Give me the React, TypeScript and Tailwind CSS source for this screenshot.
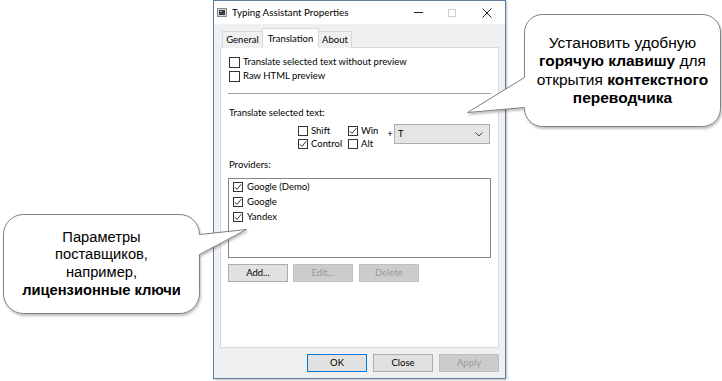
import React from 'react';

// Small Win10-style checkbox
const Check = ({ checked = false, size = 11 }: { checked?: boolean; size?: number }) => (
  <span
    className={`shrink-0 border border-[#333333] bg-white flex items-center justify-center ${size === 11 ? 'w-[11px] h-[11px]' : 'w-[10px] h-[10px]'}`}
  >
    {checked && (
      <svg width="8" height="8" viewBox="0 0 8 8">
        <path d="M0.8 4.2 L3 6.4 L7.2 1.2" fill="none" stroke="#333333" strokeWidth="1" />
      </svg>
    )}
  </span>
);

const Btn = ({ label, disabled = false, primary = false, className = '' }: { label: string; disabled?: boolean; primary?: boolean; className?: string }) => (
  <div
    className={`h-[18px] w-[60px] flex items-center justify-center border ${
      disabled
        ? 'bg-[#cccccc] border-[#bfbfbf] text-[#9a9a9a]'
        : primary
        ? 'bg-[#e1e1e1] border-[#0078d7] text-black'
        : 'bg-[#e1e1e1] border-[#adadad] text-black'
    } ${className}`}
  >
    {label}
  </div>
);

const Callouts = () => (
  <svg className="absolute left-0 top-0 pointer-events-none" width="722" height="381" viewBox="0 0 722 381">
    <defs>
      <filter id="sh" x="-10%" y="-10%" width="120%" height="130%">
        <feDropShadow dx="1" dy="2" stdDeviation="1.2" floodColor="#000" floodOpacity="0.25" />
      </filter>
    </defs>
    <path
      d="M542.5 14.5 H702.5 A18 18 0 0 1 720.5 32.5 V108.5 A18 18 0 0 1 702.5 126.5 H542.5 A18 18 0 0 1 524.5 108.5 V107.5 L467.5 112.5 L524.5 77.5 V32.5 A18 18 0 0 1 542.5 14.5 Z"
      fill="#ffffff"
      stroke="#7f7f7f"
      strokeWidth="1"
      filter="url(#sh)"
    />
    <path
      d="M23.5 214.5 H179.5 A20 20 0 0 1 199.5 234.5 L246.5 229.5 L199.5 254.5 V293.5 A20 20 0 0 1 179.5 313.5 H23.5 A20 20 0 0 1 3.5 293.5 V234.5 A20 20 0 0 1 23.5 214.5 Z"
      fill="#ffffff"
      stroke="#7f7f7f"
      strokeWidth="1"
      filter="url(#sh)"
    />
  </svg>
);

export default function App() {
  return (
    <div className="relative w-[722px] h-[381px] bg-white overflow-hidden font-['Lato',sans-serif] text-[9.5px] text-black leading-none">
      {/* dialog window */}
      <div className="ml-[213px] w-[293px] h-[379px] border border-[#5d7d9e] bg-[#f0f0f0] flex flex-col shadow-[1px_1px_2px_rgba(0,0,0,0.25)]">
        {/* title bar */}
        <div className="h-[23px] bg-white flex items-center shrink-0">
          <svg className="ml-[3px]" width="10" height="9" viewBox="0 0 10 9">
            <rect x="0.5" y="0.5" width="9" height="8" fill="#d8d8d8" stroke="#8a8a8a" />
            <rect x="2" y="2" width="6" height="5" fill="#3a3a3a" />
            <rect x="3" y="3" width="2" height="1" fill="#bdbdbd" />
          </svg>
          <span className="ml-[5px] text-[9.8px] text-black">Typing Assistant Properties</span>
          <div className="ml-auto flex items-center h-full">
            <div className="w-[34px] h-full flex items-center justify-center">
              <div className="w-[9px] h-px bg-[#222]" />
            </div>
            <div className="w-[34px] h-full flex items-center justify-center">
              <div className="w-[8px] h-[8px] border border-[#cfcfcf]" />
            </div>
            <div className="w-[36px] h-full flex items-center justify-center">
              <svg width="10" height="10" viewBox="0 0 10 10">
                <path d="M0.5 0.5 L9.5 9.5 M9.5 0.5 L0.5 9.5" stroke="#222" strokeWidth="1" />
              </svg>
            </div>
          </div>
        </div>

        {/* body */}
        <div className="flex-1 flex flex-col px-[6px] pt-[4px] pb-[6px]">
          {/* tabs */}
          <div className="h-[20px] -mb-px flex items-end pl-[2px] relative z-10">
            <div className="h-[17px] border border-b-0 border-[#d9d9d9] bg-[#f0f0f0] flex items-center w-[41px] justify-center">General</div>
            <div className="h-[20px] w-[57px] border border-b-0 border-[#d9d9d9] bg-white flex items-center justify-center -mx-px">Translation</div>
            <div className="h-[17px] w-[34px] border border-b-0 border-[#d9d9d9] bg-[#f0f0f0] flex items-center justify-center">About</div>
          </div>

          {/* tab panel */}
          <div className="flex-1 border border-[#d9d9d9] bg-white pl-[7px] pr-[7px] pt-[7px] flex flex-col">
            <div className="h-[14px] flex items-center gap-[3px] pl-px">
              <Check />
              <span>Translate selected text without preview</span>
            </div>
            <div className="h-[14px] flex items-center gap-[3px] pl-px">
              <Check />
              <span>Raw HTML preview</span>
            </div>

            <div className="mt-[10px] h-px bg-[#a0a0a0]" />

            <div className="mt-[12px] h-[14px] flex items-center pl-px">Translate selected text:</div>

            {/* hotkey */}
            <div className="mt-[4px] flex items-start pl-[70px]">
              <div className="w-[88px] grid grid-cols-[50px_38px]">
                <div className="h-[13px] flex items-center gap-[3px]">
                  <Check size={10} />
                  <span>Shift</span>
                </div>
                <div className="h-[13px] flex items-center gap-[3px]">
                  <Check size={10} checked />
                  <span>Win</span>
                </div>
                <div className="h-[13px] flex items-center gap-[3px]">
                  <Check size={10} checked />
                  <span>Control</span>
                </div>
                <div className="h-[13px] flex items-center gap-[3px]">
                  <Check size={10} />
                  <span>Alt</span>
                </div>
              </div>
              <div className="w-[8px] h-[20px] flex items-center justify-center">+</div>
              <div className="w-[96px] h-[20px] border border-[#adadad] bg-[#e5e5e5] flex items-center pl-[3px] pr-[6px]">
                <span>T</span>
                <svg className="ml-auto" width="8" height="5" viewBox="0 0 8 5">
                  <path d="M0.5 0.5 L4 4 L7.5 0.5" fill="none" stroke="#444" strokeWidth="1" />
                </svg>
              </div>
            </div>

            <div className="mt-[8px] h-[14px] flex items-center pl-px">Providers:</div>

            {/* providers list */}
            <div className="mt-[6px] h-[80px] border border-[#828790] bg-white pl-[4px]">
              {['Google (Demo)', 'Google', 'Yandex'].map((p) => (
                <div key={p} className="h-[15px] flex items-center gap-[4px]">
                  <Check size={10} checked />
                  <span>{p}</span>
                </div>
              ))}
            </div>

            <div className="mt-[6px] flex">
              <Btn label="Add..." />
              <Btn label="Edit..." disabled className="ml-[5px]" />
              <Btn label="Delete" disabled className="ml-[6px]" />
            </div>
          </div>

          {/* dialog buttons */}
          <div className="mt-[6px] flex justify-end gap-[6px]">
            <Btn label="OK" primary />
            <Btn label="Close" />
            <Btn label="Apply" disabled />
          </div>
        </div>
      </div>

      {/* callouts */}
      <Callouts />
      <div className="absolute left-[524px] top-[14px] w-[197px] h-[113px] flex items-center justify-center text-center font-['Liberation_Sans',Arial,sans-serif] text-[15.5px] leading-[18.3px] text-black">
        <p>
          Установить удобную
          <br />
          <b>горячую клавишу</b> для
          <br />
          открытия <b>контекстного</b>
          <br />
          <b>переводчика</b>
        </p>
      </div>
      <div className="absolute left-[3px] top-[214px] w-[197px] h-[100px] flex items-center justify-center text-center font-['Liberation_Sans',Arial,sans-serif] text-[14.7px] leading-[17.7px] text-black">
        <p>
          Параметры
          <br />
          поставщиков,
          <br />
          например,
          <br />
          <b>лицензионные ключи</b>
        </p>
      </div>
    </div>
  );
}
